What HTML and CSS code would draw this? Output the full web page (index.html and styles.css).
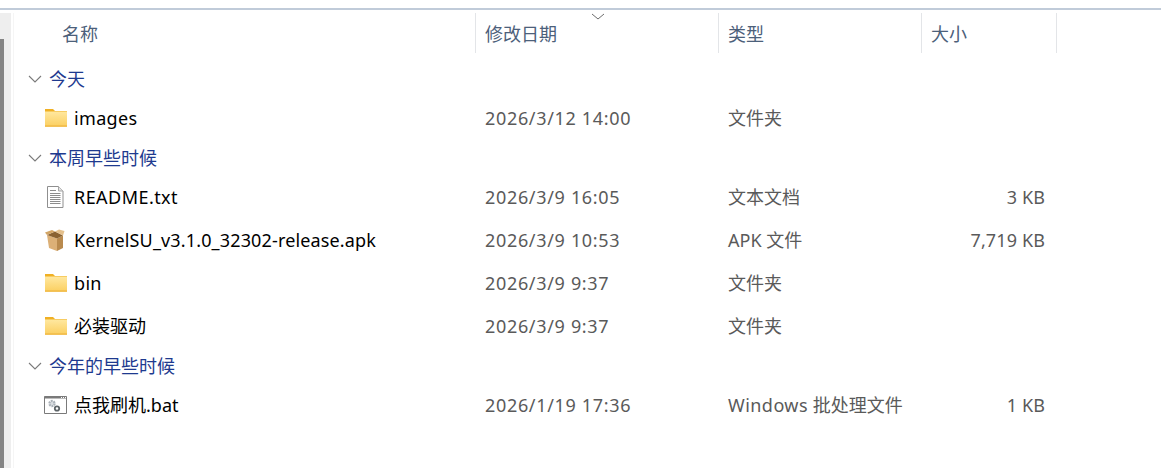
FILE: index.html
```html
<!DOCTYPE html>
<html lang="zh">
<head>
<meta charset="utf-8">
<title>文件列表</title>
<link rel="stylesheet" href="styles.css">
</head>
<body>
<svg class="defs" width="0" height="0" aria-hidden="true">
  <defs>
    <linearGradient id="fg" x1="0" y1="0" x2="0" y2="1"><stop offset="0" stop-color="#ffe8a0"/><stop offset="1" stop-color="#fbcf60"/></linearGradient>
    <symbol id="folder" viewBox="0 0 24 24">
      <path d="M1 3h8l2 2h12v15.500H1z" fill="#f0b024"/>
      <path d="M1 5.500h22v15H1z" fill="url(#fg)"/>
      <path d="M1 19.500h22v1H1z" fill="#ecb03a"/>
    </symbol>
  </defs>
</svg>
<div class="window">
  <aside class="edge"><div class="thumb"></div></aside>
  <main class="list">
    <header class="head">
      <div class="col name"><span>名称</span></div>
      <div class="col date"><span>修改日期</span><svg class="sort" width="14" height="7" viewBox="0 0 14 7"><path d="M1 1l6 5 6-5" fill="none" stroke="#6d6d6d"/></svg></div>
      <div class="col type"><span>类型</span></div>
      <div class="col size"><span>大小</span></div>
    </header>

    <section class="group first">
      <h2 class="group-title"><svg class="chev" width="14" height="8" viewBox="0 0 14 8"><path d="M1 1l6 6 6-6" fill="none" stroke="#7a7a7a" stroke-width="1.100"/></svg>今天</h2>
      <div class="row">
        <div class="cell name"><svg class="icon"><use href="#folder"/></svg><span class="fit-mid">images</span></div>
        <div class="cell date">2026/3/12 14:00</div>
        <div class="cell type">文件夹</div>
        <div class="cell size"></div>
      </div>
    </section>

    <section class="group">
      <h2 class="group-title"><svg class="chev" width="14" height="8" viewBox="0 0 14 8"><path d="M1 1l6 6 6-6" fill="none" stroke="#7a7a7a" stroke-width="1.100"/></svg>本周早些时候</h2>
      <div class="row">
        <div class="cell name">
          <svg class="icon" viewBox="0 0 24 24"><path d="M3.500 1.500h11l4.500 4.500v16.500h-15.500z" fill="#fff" stroke="#8f8f8f"/><path d="M14.500 1.500v4.500h4.500" fill="#e4e4e4" stroke="#a5a5a5"/><path d="M6 5.500h6M6 8.500h10.500M6 10.500h10.500M6 12.500h10.500M6 14.500h10.500M6 16.500h10.500M6 18.500h10.500" stroke="#8d8d8d" fill="none"/></svg>
          <span class="fit-wide">README.txt</span></div>
        <div class="cell date">2026/3/9 16:05</div>
        <div class="cell type">文本文档</div>
        <div class="cell size">3 KB</div>
      </div>
      <div class="row">
        <div class="cell name">
          <svg class="icon" viewBox="0 0 24 24"><path d="M3 7l10 3.500V23L5 20z" fill="#dcb077"/><path d="M13 10.500l6-3V20l-6 3z" fill="#b98a4e"/><path d="M3 7l8-3.500 8 4-6 3z" fill="#8a6232"/><path d="M3 7L1 4.500 8 2l3 1.500z" fill="#d2a566"/><path d="M19 7.500l1.500-4.500L15 1.500l-4 2z" fill="#e4c08c"/></svg>
          <span class="fit-slim">KernelSU_v3.1.0_32302-release.apk</span></div>
        <div class="cell date">2026/3/9 10:53</div>
        <div class="cell type">APK 文件</div>
        <div class="cell size">7,719 KB</div>
      </div>
      <div class="row">
        <div class="cell name"><svg class="icon"><use href="#folder"/></svg><span class="fit-mid">bin</span></div>
        <div class="cell date">2026/3/9 9:37</div>
        <div class="cell type">文件夹</div>
        <div class="cell size"></div>
      </div>
      <div class="row">
        <div class="cell name"><svg class="icon"><use href="#folder"/></svg>必装驱动</div>
        <div class="cell date">2026/3/9 9:37</div>
        <div class="cell type">文件夹</div>
        <div class="cell size"></div>
      </div>
    </section>

    <section class="group">
      <h2 class="group-title"><svg class="chev" width="14" height="8" viewBox="0 0 14 8"><path d="M1 1l6 6 6-6" fill="none" stroke="#7a7a7a" stroke-width="1.100"/></svg>今年的早些时候</h2>
      <div class="row">
        <div class="cell name">
          <svg class="icon" viewBox="0 0 24 24"><path d="M.5 3.500h22v17h-22z" fill="#fff" stroke="#7a7a7a"/><path d="M.5 3.500h22v2h-22z" fill="#7a7a7a"/><path d="M17 4.500h1M19 4.500h1M21 4.500h1" stroke="#fff"/><circle cx="8" cy="10.500" r="2.600" fill="#d9dde1" stroke="#aab1b8" stroke-width="2.200" stroke-dasharray="1.800 .9"/><circle cx="13" cy="15.500" r="2.200" fill="#fff" stroke="#5d6468" stroke-width="1.800"/></svg>
          点我刷机.bat</div>
        <div class="cell date">2026/1/19 17:36</div>
        <div class="cell type"><span class="fit-wide">Windows</span> 批处理文件</div>
        <div class="cell size">1 KB</div>
      </div>
    </section>
  </main>
</div>
</body>
</html>
```
FILE: styles.css
```css
* { box-sizing: border-box; }
html, body { margin: 0; height: 100%; background: #fff; overflow: hidden; }
body {
  font-family: "Noto Sans", "Noto Sans CJK SC", sans-serif;
  font-size: 18px;
  color: #000;
  padding-top: 8px;
}
.defs { position: absolute; }
.window {
  display: flex;
  height: 460px;
  border-top: 2px solid #c0cbd9;
}
.edge {
  width: 14px;
  flex: none;
  margin-top: 3px;
  padding-top: 26px;
  border-right: 1px solid #f5f5f5;
  background: linear-gradient(to right, #eeeeee 11px, #ffffff 11px);
}
.thumb { width: 4px; height: 100%; background: #848484; }
.list { flex: 1; padding-left: 8px; min-width: 0; }

.head {
  display: flex;
  height: 43px;
  padding-top: 3px;
}
.col {
  position: relative;
  display: flex;
  align-items: center;
  padding-left: 9px;
  padding-top: 2px;
  color: #4c607a;
  font-size: 18px;
  line-height: 24px;
  border-right: 1px solid #e3e5e8;
}
.col.name { width: 454px; padding-left: 40px; }
.col.date { width: 243px; }
.col.type { width: 203px; }
.col.size { width: 135px; }
.sort { position: absolute; left: 115px; top: 0; }

.group.first { margin-top: 7px; }
.group-title {
  display: flex;
  align-items: center;
  height: 36px;
  margin: 0;
  padding-left: 6px;
  padding-top: 2px;
  font-size: 18px;
  font-weight: 400;
  color: #1e3a8f;
  line-height: 24px;
}
.chev { margin-right: 7px; flex: none; }
.row { display: flex; height: 43px; align-items: center; }
.cell { white-space: nowrap; line-height: 24px; }
.cell.name { width: 453px; display: flex; align-items: center; padding-left: 22px; }
.cell.date { width: 243px; padding-left: 10px; color: #5a5a5a; letter-spacing: .67px; }
.cell.type { width: 203px; padding-left: 10px; color: #5a5a5a; }
.cell.size { width: 124px; text-align: right; color: #5a5a5a; letter-spacing: .12px; }
.icon { width: 24px; height: 24px; margin-right: 6px; flex: none; }
.fit-wide { letter-spacing: .45px; }
.fit-mid { letter-spacing: .33px; }
.fit-slim { letter-spacing: .15px; }
```
